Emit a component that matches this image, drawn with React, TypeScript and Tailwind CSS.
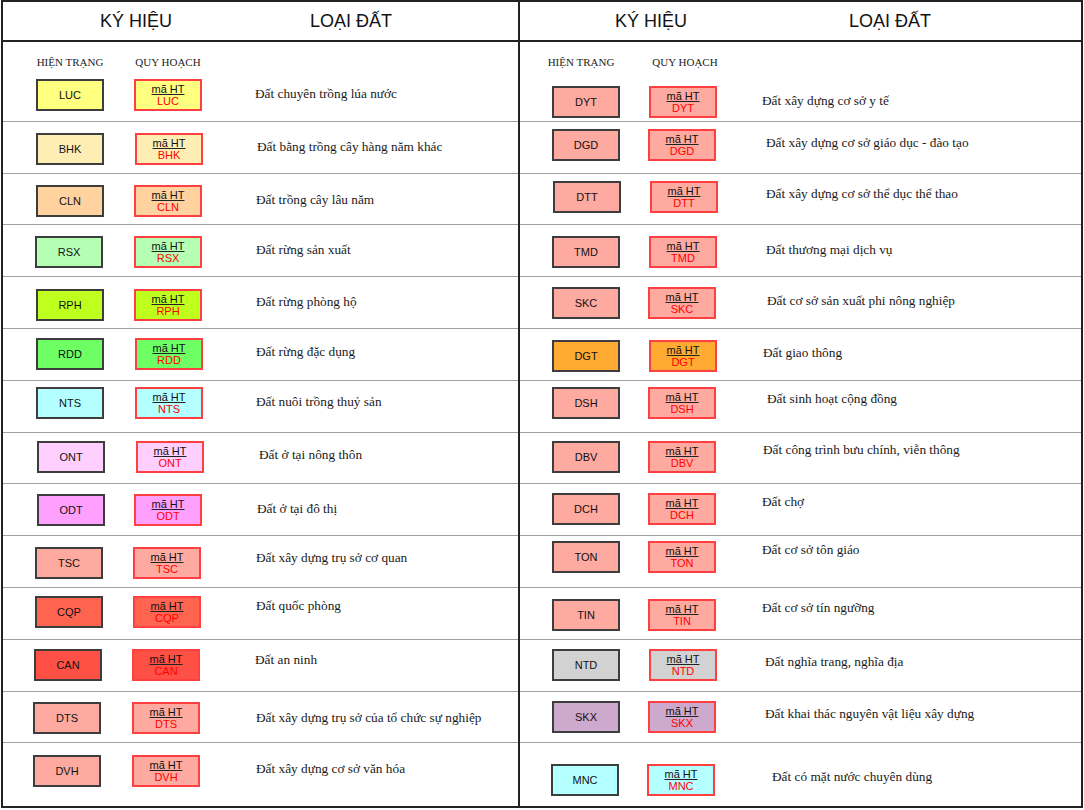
import React from "react";

type Row = {
  c: string;
  bg: string;
  t: string;
  h: string;
  pt: string;
  b1: string;
  b2: string;
  tx: string;
  ty: string;
};

const leftRows: Row[] = [
  { c: "BHK", bg: "bg-[#ffeeb4]", t: "Đất bằng trồng cây hàng năm khác", h: "h-[52px]", pt: "pt-[11px]", b1: "ml-[33px]", b2: "ml-[31px]", tx: "ml-[54px]", ty: "mt-[6px]" },
  { c: "CLN", bg: "bg-[#ffd2a0]", t: "Đất trồng cây lâu năm", h: "h-[51px]", pt: "pt-[11px]", b1: "ml-[33px]", b2: "ml-[30px]", tx: "ml-[54px]", ty: "mt-[7px]" },
  { c: "RSX", bg: "bg-[#b4ffb4]", t: "Đất rừng sản xuất", h: "h-[52px]", pt: "pt-[11px]", b1: "ml-[32px]", b2: "ml-[31px]", tx: "ml-[54px]", ty: "mt-[6px]" },
  { c: "RPH", bg: "bg-[#beff1e]", t: "Đất rừng phòng hộ", h: "h-[52px]", pt: "pt-[12px]", b1: "ml-[33px]", b2: "ml-[30px]", tx: "ml-[54px]", ty: "mt-[5px]" },
  { c: "RDD", bg: "bg-[#6eff64]", t: "Đất rừng đặc dụng", h: "h-[52px]", pt: "pt-[9px]", b1: "ml-[33px]", b2: "ml-[31px]", tx: "ml-[53px]", ty: "mt-[6px]" },
  { c: "NTS", bg: "bg-[#b4ffff]", t: "Đất nuôi trồng thuỷ sản", h: "h-[52px]", pt: "pt-[6px]", b1: "ml-[33px]", b2: "ml-[31px]", tx: "ml-[53px]", ty: "mt-[7px]" },
  { c: "ONT", bg: "bg-[#ffd0ff]", t: "Đất ở tại nông thôn", h: "h-[51px]", pt: "pt-[8px]", b1: "ml-[34px]", b2: "ml-[31px]", tx: "ml-[55px]", ty: "mt-[6px]" },
  { c: "ODT", bg: "bg-[#ffa0ff]", t: "Đất ở tại đô thị", h: "h-[52px]", pt: "pt-[10px]", b1: "ml-[34px]", b2: "ml-[29px]", tx: "ml-[55px]", ty: "mt-[7px]" },
  { c: "TSC", bg: "bg-[#ffaaa0]", t: "Đất xây dựng trụ sở cơ quan", h: "h-[52px]", pt: "pt-[11px]", b1: "ml-[32px]", b2: "ml-[30px]", tx: "ml-[55px]", ty: "mt-[3px]" },
  { c: "CQP", bg: "bg-[#ff6450]", t: "Đất quốc phòng", h: "h-[52px]", pt: "pt-[8px]", b1: "ml-[32px]", b2: "ml-[30px]", tx: "ml-[55px]", ty: "mt-[2px]" },
  { c: "CAN", bg: "bg-[#ff5046]", t: "Đất an ninh", h: "h-[52px]", pt: "pt-[9px]", b1: "ml-[31px]", b2: "ml-[30px]", tx: "ml-[55px]", ty: "mt-[3px]" },
  { c: "DTS", bg: "bg-[#ffaaa0]", t: "Đất xây dựng trụ sở của tổ chức sự nghiệp", h: "h-[51px]", pt: "pt-[10px]", b1: "ml-[30px]", b2: "ml-[31px]", tx: "ml-[56px]", ty: "mt-[8px]" },
  { c: "DVH", bg: "bg-[#ffaaa0]", t: "Đất xây dựng cơ sở văn hóa", h: "flex-1", pt: "pt-[12px]", b1: "ml-[30px]", b2: "ml-[31px]", tx: "ml-[56px]", ty: "mt-[6px]" },
];

const rightRows: Row[] = [
  { c: "DGD", bg: "bg-[#ffaaa0]", t: "Đất xây dựng cơ sở giáo dục - đào tạo", h: "h-[52px]", pt: "pt-[7px]", b1: "ml-[32px]", b2: "ml-[28px]", tx: "ml-[50px]", ty: "mt-[6px]" },
  { c: "DTT", bg: "bg-[#ffaaa0]", t: "Đất xây dựng cơ sở thể dục thể thao", h: "h-[51px]", pt: "pt-[7px]", b1: "ml-[33px]", b2: "ml-[29px]", tx: "ml-[48px]", ty: "mt-[5px]" },
  { c: "TMD", bg: "bg-[#ffaaa0]", t: "Đất thương mại dịch vụ", h: "h-[52px]", pt: "pt-[11px]", b1: "ml-[32px]", b2: "ml-[29px]", tx: "ml-[49px]", ty: "mt-[6px]" },
  { c: "SKC", bg: "bg-[#ffaaa0]", t: "Đất cơ sở sản xuất phi nông nghiệp", h: "h-[52px]", pt: "pt-[10px]", b1: "ml-[32px]", b2: "ml-[28px]", tx: "ml-[51px]", ty: "mt-[6px]" },
  { c: "DGT", bg: "bg-[#ffaa32]", t: "Đất giao thông", h: "h-[52px]", pt: "pt-[11px]", b1: "ml-[32px]", b2: "ml-[29px]", tx: "ml-[46px]", ty: "mt-[5px]" },
  { c: "DSH", bg: "bg-[#ffaaa0]", t: "Đất sinh hoạt cộng đồng", h: "h-[52px]", pt: "pt-[6px]", b1: "ml-[32px]", b2: "ml-[28px]", tx: "ml-[51px]", ty: "mt-[4px]" },
  { c: "DBV", bg: "bg-[#ffaaa0]", t: "Đất công trình bưu chính, viễn thông", h: "h-[51px]", pt: "pt-[8px]", b1: "ml-[32px]", b2: "ml-[28px]", tx: "ml-[47px]", ty: "mt-[1px]" },
  { c: "DCH", bg: "bg-[#ffaaa0]", t: "Đất chợ", h: "h-[52px]", pt: "pt-[9px]", b1: "ml-[32px]", b2: "ml-[28px]", tx: "ml-[46px]", ty: "mt-[1px]" },
  { c: "TON", bg: "bg-[#ffaaa0]", t: "Đất cơ sở tôn giáo", h: "h-[52px]", pt: "pt-[5px]", b1: "ml-[32px]", b2: "ml-[28px]", tx: "ml-[46px]", ty: "mt-[1px]" },
  { c: "TIN", bg: "bg-[#ffaaa0]", t: "Đất cơ sở tín ngưỡng", h: "h-[52px]", pt: "pt-[11px]", b1: "ml-[32px]", b2: "ml-[28px]", tx: "ml-[46px]", ty: "mt-[1px]" },
  { c: "NTD", bg: "bg-[#d2d2d2]", t: "Đất nghĩa trang, nghĩa địa", h: "h-[52px]", pt: "pt-[9px]", b1: "ml-[32px]", b2: "ml-[29px]", tx: "ml-[48px]", ty: "mt-[5px]" },
  { c: "SKX", bg: "bg-[#cdaacd]", t: "Đất khai thác nguyên vật liệu xây dựng", h: "h-[51px]", pt: "pt-[9px]", b1: "ml-[32px]", b2: "ml-[28px]", tx: "ml-[49px]", ty: "mt-[5px]" },
  { c: "MNC", bg: "bg-[#b4ffff]", t: "Đất có mặt nước chuyên dùng", h: "flex-1", pt: "pt-[21px]", b1: "ml-[31px]", b2: "ml-[28px]", tx: "ml-[57px]", ty: "mt-[5px]" },
];

function Box1({ code, bg, cls }: { code: string; bg: string; cls: string }) {
  return (
    <div
      className={`${cls} ${bg} w-[68px] h-[32px] shrink-0 border-2 border-[#3d3d3d] flex items-center justify-center text-[11px] leading-[12px] text-[#111]`}
    >
      {code}
    </div>
  );
}

function Box2({ code, bg, cls }: { code: string; bg: string; cls: string }) {
  return (
    <div
      className={`${cls} ${bg} w-[68px] h-[32px] shrink-0 border-2 border-[#ff4040] flex flex-col items-center justify-center text-[11px] leading-[12px]`}
    >
      <span className="text-[#111] underline decoration-[#222] underline-offset-[1px]">mã HT</span>
      <span className="text-[#ff0000]">{code}</span>
    </div>
  );
}

function Desc({ text, cls }: { text: string; cls: string }) {
  return (
    <div
      className={`${cls} whitespace-nowrap font-['Liberation_Serif',serif] text-[13.3px] leading-[16px] text-[#1a1a1a]`}
    >
      {text}
    </div>
  );
}

function Line({ r, last }: { r: Row; last: boolean }) {
  return (
    <div className={`${r.h} ${r.pt} ${last ? "" : "border-b border-[#a0a0a0]"} flex items-start shrink-0`}>
      <Box1 code={r.c} bg={r.bg} cls={r.b1} />
      <Box2 code={r.c} bg={r.bg} cls={r.b2} />
      <Desc text={r.t} cls={`${r.tx} ${r.ty}`} />
    </div>
  );
}

function Header({ pl, gap }: { pl: string; gap: string }) {
  return (
    <div className={`h-[40px] shrink-0 border-b-2 border-[#222] flex items-center ${pl} text-[18px] text-[#111]`}>
      <span className="whitespace-nowrap">KÝ HIỆU</span>
      <span className={`whitespace-nowrap ${gap}`}>LOẠI ĐẤT</span>
    </div>
  );
}

function SubHead({ a, b }: { a: string; b: string }) {
  return (
    <div className="mt-[13px] flex h-[14px] items-center font-['Liberation_Serif',serif] text-[11px] leading-[14px] text-[#222]">
      <span className={`${a} w-[68px] text-center whitespace-nowrap`}>HIỆN TRẠNG</span>
      <span className={`${b} w-[68px] text-center whitespace-nowrap`}>QUY HOẠCH</span>
    </div>
  );
}

export default function App() {
  return (
    <div className="w-[1084px] h-[810px] bg-white font-['Liberation_Sans',Arial,sans-serif]">
      <div className="ml-[1px] w-[1082px] h-[808px] border-2 border-[#222] flex">
        {/* Left column */}
        <div className="w-[517px] shrink-0 border-r-2 border-[#222] flex flex-col">
          <Header pl="pl-[97px]" gap="ml-[138px]" />
          <div className="h-[80px] shrink-0 border-b border-[#a0a0a0] flex flex-col">
            <SubHead a="ml-[33px]" b="ml-[30px]" />
            <div className="mt-[10px] flex items-start">
              <Box1 code="LUC" bg="bg-[#ffff80]" cls="ml-[33px]" />
              <Box2 code="LUC" bg="bg-[#ffff80]" cls="ml-[30px]" />
              <Desc text="Đất chuyên trồng lúa nước" cls="ml-[53px] mt-[7px]" />
            </div>
          </div>
          {leftRows.map((r, i) => (
            <Line key={r.c} r={r} last={i === leftRows.length - 1} />
          ))}
        </div>
        {/* Right column */}
        <div className="flex-1 flex flex-col">
          <Header pl="pl-[95px]" gap="ml-[162px]" />
          <div className="h-[80px] shrink-0 border-b border-[#a0a0a0] flex flex-col">
            <SubHead a="ml-[27px]" b="ml-[36px]" />
            <div className="mt-[17px] flex items-start">
              <Box1 code="DYT" bg="bg-[#ffaaa0]" cls="ml-[32px]" />
              <Box2 code="DYT" bg="bg-[#ffaaa0]" cls="ml-[29px]" />
              <Desc text="Đất xây dựng cơ sở y tế" cls="ml-[45px] mt-[7px]" />
            </div>
          </div>
          {rightRows.map((r, i) => (
            <Line key={r.c} r={r} last={i === rightRows.length - 1} />
          ))}
        </div>
      </div>
    </div>
  );
}
